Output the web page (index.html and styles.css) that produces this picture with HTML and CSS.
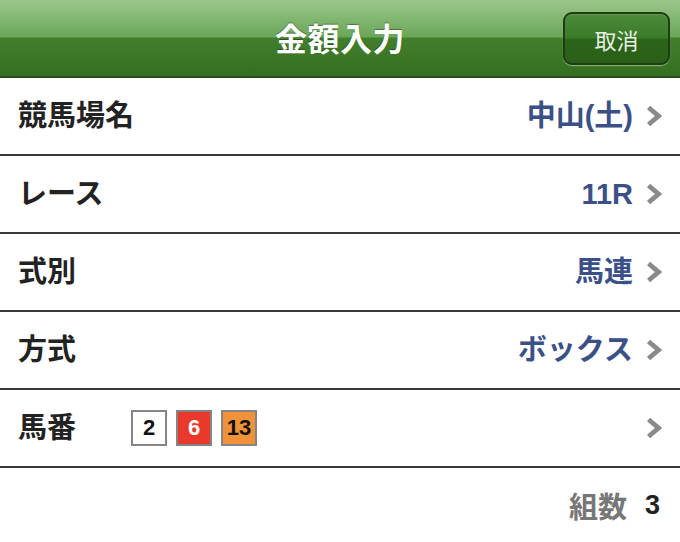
FILE: index.html
```html
<!DOCTYPE html>
<html lang="ja">
<head>
<meta charset="utf-8">
<title>金額入力</title>
<link rel="stylesheet" href="styles.css">
</head>
<body>
<div class="screen">
  <header class="navbar">
    <h1 class="title">金額入力</h1>
    <button class="cancel">取消</button>
  </header>
  <ul class="list">
    <li class="row">
      <span class="label">競馬場名</span>
      <span class="value">中山(土)</span>
      <span class="chev"><svg width="16" height="22" viewBox="0 0 16 22"><path d="M2.5 2.5 L12.5 11 L2.5 19.5" fill="none" stroke="#8a8a8a" stroke-width="4.8"/></svg></span>
    </li>
    <li class="row">
      <span class="label">レース</span>
      <span class="value">11R</span>
      <span class="chev"><svg width="16" height="22" viewBox="0 0 16 22"><path d="M2.5 2.5 L12.5 11 L2.5 19.5" fill="none" stroke="#8a8a8a" stroke-width="4.8"/></svg></span>
    </li>
    <li class="row">
      <span class="label">式別</span>
      <span class="value">馬連</span>
      <span class="chev"><svg width="16" height="22" viewBox="0 0 16 22"><path d="M2.5 2.5 L12.5 11 L2.5 19.5" fill="none" stroke="#8a8a8a" stroke-width="4.8"/></svg></span>
    </li>
    <li class="row">
      <span class="label">方式</span>
      <span class="value">ボックス</span>
      <span class="chev"><svg width="16" height="22" viewBox="0 0 16 22"><path d="M2.5 2.5 L12.5 11 L2.5 19.5" fill="none" stroke="#8a8a8a" stroke-width="4.8"/></svg></span>
    </li>
    <li class="row">
      <span class="label label-short">馬番</span>
      <span class="nums">
        <span class="num num-white">2</span>
        <span class="num num-red">6</span>
        <span class="num num-orange">13</span>
      </span>
      <span class="chev"><svg width="16" height="22" viewBox="0 0 16 22"><path d="M2.5 2.5 L12.5 11 L2.5 19.5" fill="none" stroke="#8a8a8a" stroke-width="4.8"/></svg></span>
    </li>
  </ul>
  <div class="summary">
    <span class="sum-label">組数</span>
    <span class="sum-value">3</span>
  </div>
</div>
</body>
</html>
```
FILE: styles.css
```css
* { box-sizing: border-box; }
html, body { margin: 0; padding: 0; background: #fff; }
body {
  font-family: "Liberation Sans", "Noto Sans CJK JP", sans-serif;
  width: 680px;
  height: 542px;
  overflow: hidden;
}
.screen { display: flex; flex-direction: column; }

.navbar {
  height: 78px;
  display: flex;
  align-items: center;
  justify-content: center;
  position: relative;
  background: linear-gradient(to bottom, #9cc78b 0px, #6aa657 37px, #427f2d 38px, #346f20 76px);
  border-bottom: 2px solid #2a4d1e;
}
.title {
  margin: 0 0 2px 0;
  font-family: "Noto Sans CJK JP", sans-serif;
  font-size: 32px;
  font-weight: 700;
  color: #fff;
  letter-spacing: 0.5px;
  text-shadow: 0 -1px 1px rgba(0,0,0,0.35);
  line-height: 1;
}
.cancel {
  position: absolute;
  right: 10px;
  top: 12px;
  width: 107px;
  height: 53px;
  border-radius: 9px;
  border: 2px solid #1f3d14;
  background: linear-gradient(to bottom, #4c8b39 0%, #3b7a28 48%, #2c6519 52%, #2a5f17 100%);
  box-shadow: 0 1px 1px rgba(200,235,180,0.6), inset 0 1px 1px rgba(255,255,255,0.15);
  color: #e8efe4;
  font-family: "Noto Sans CJK JP", sans-serif;
  font-size: 22px;
  font-weight: 400;
  padding: 0;
  line-height: 1;
}

.list { list-style: none; margin: 0; padding: 0; }
.row {
  height: 78px;
  border-bottom: 2px solid #3a3a3a;
  display: flex;
  align-items: center;
  padding: 0 18px 0 18px;
}
.label {
  font-family: "Noto Sans CJK JP", sans-serif;
  font-weight: 700;
  font-size: 29px;
  color: #222;
  flex: 1;
  line-height: 1;
  margin-bottom: 6px;
}
.label-short { flex: 0 0 auto; width: 113px; }
.value {
  font-family: "Liberation Sans", "Noto Sans CJK JP", sans-serif;
  font-weight: 700;
  font-size: 29px;
  color: #3c5088;
  line-height: 1;
}
.chev {
  display: flex;
  align-items: center;
  margin-left: 13px;
  width: 16px;
}
.nums { flex: 1; display: flex; gap: 9px; }
.num {
  width: 36px;
  height: 36px;
  border: 2px solid #858585;
  display: flex;
  align-items: center;
  justify-content: center;
  font-family: "Liberation Sans", sans-serif;
  font-weight: 700;
  font-size: 22px;
  color: #111;
}
.num-white { background: #fff; }
.num-red { background: #e8392b; color: #fff; }
.num-orange { background: #f0923a; }

.summary {
  height: 74px;
  display: flex;
  align-items: center;
  justify-content: flex-end;
  padding-right: 20px;
  gap: 18px;
}
.sum-label {
  font-family: "Noto Sans CJK JP", sans-serif;
  font-weight: 700;
  font-size: 29px;
  color: #777;
  line-height: 1;
}
.sum-value {
  font-family: "Liberation Sans", sans-serif;
  font-weight: 700;
  font-size: 27px;
  color: #222;
  line-height: 1;
}
```
